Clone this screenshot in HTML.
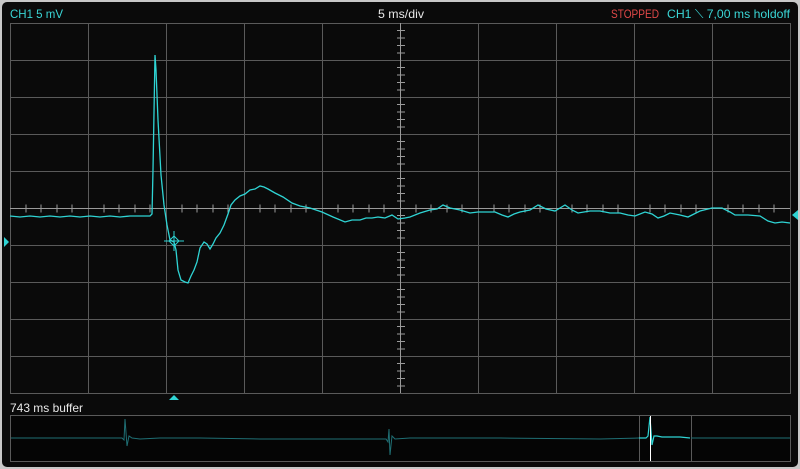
<!DOCTYPE html>
<html><head><style>
html,body{margin:0;padding:0;background:#0a0a0a;width:800px;height:469px;overflow:hidden}
svg{display:block}
text{font-family:"Liberation Sans",sans-serif;font-size:12px}
</style></head><body>
<svg width="800" height="469" viewBox="0 0 800 469">
<rect x="0" y="0" width="800" height="469" fill="#c8c8c8"/>
<rect x="2" y="2" width="796" height="465" rx="5" fill="#0a0a0a"/>
<text x="10" y="18" fill="#3ad6d6" textLength="53" lengthAdjust="spacingAndGlyphs">CH1 5 mV</text>
<text x="378" y="18" fill="#e8e8e8" textLength="46" lengthAdjust="spacingAndGlyphs">5 ms/div</text>
<text x="611" y="18" fill="#e04848" textLength="48" lengthAdjust="spacingAndGlyphs">STOPPED</text>
<text x="667" y="18" fill="#3ad6d6" textLength="123" lengthAdjust="spacingAndGlyphs">CH1 ⟍ 7,00 ms holdoff</text>
<g stroke="#5a5a5a" stroke-width="1" fill="none">
<rect x="10.5" y="23.5" width="780" height="370"/>
<path d="M88.5 23V393M166.5 23V393M244.5 23V393M322.5 23V393M478.5 23V393M556.5 23V393M634.5 23V393M712.5 23V393"/>
<path d="M10 60.5H790M10 97.5H790M10 134.5H790M10 171.5H790M10 245.5H790M10 282.5H790M10 319.5H790M10 356.5H790"/>
</g>
<g stroke="#9a9a9a" stroke-width="1">
<path d="M10 208.5H790M400.5 23V393"/>
<path d="M26 204.5v8M41 204.5v8M57 204.5v8M72 204.5v8M104 204.5v8M119 204.5v8M135 204.5v8M150 204.5v8M182 204.5v8M197 204.5v8M213 204.5v8M228 204.5v8M260 204.5v8M275 204.5v8M291 204.5v8M306 204.5v8M338 204.5v8M353 204.5v8M369 204.5v8M384 204.5v8M416 204.5v8M431 204.5v8M447 204.5v8M462 204.5v8M494 204.5v8M509 204.5v8M525 204.5v8M540 204.5v8M572 204.5v8M587 204.5v8M603 204.5v8M618 204.5v8M650 204.5v8M665 204.5v8M681 204.5v8M696 204.5v8M728 204.5v8M743 204.5v8M759 204.5v8M774 204.5v8"/>
<path d="M397 30.5h8M397 38h8M397 45.5h8M397 53h8M397 67.5h8M397 75h8M397 82.5h8M397 90h8M397 104.5h8M397 112h8M397 119.5h8M397 127h8M397 141.5h8M397 149h8M397 156.5h8M397 164h8M397 178.5h8M397 186h8M397 193.5h8M397 201h8M397 215.5h8M397 223h8M397 230.5h8M397 238h8M397 252.5h8M397 260h8M397 267.5h8M397 275h8M397 289.5h8M397 297h8M397 304.5h8M397 312h8M397 326.5h8M397 334h8M397 341.5h8M397 349h8M397 363.5h8M397 371h8M397 378.5h8M397 386h8"/>
</g>
<polyline fill="none" stroke="#2fd4d4" stroke-width="1.3" points="10,216 20,217 30,216 40,217 50,216 60,217 70,216 80,217 90,216 100,217 110,216 120,217 130,216 140,216 150,216 152,214 153,170 155,55 156,70 158,120 161,175 164,205 167,225 170,240 174,242 176,250 178,270 181,280 185,282 188,283 191,276 194,270 197,262 200,248 204,242 207,244 210,249 213,244 216,238 220,233 224,225 228,214 231,205 235,200 240,196 245,194 250,190 255,189 260,186 264,187 268,189 275,193 283,197 292,203 300,206 310,208 322,212 333,217 345,222 352,220 360,220 366,218 372,218 378,217 385,218 392,215 398,219 405,218 410,217 420,213 430,210 437,209 443,205 450,208 460,210 470,213 478,212 487,212 495,212 502,215 508,217 514,214 520,212 530,210 538,205 546,209 555,211 565,205 572,210 578,213 590,211 600,211 610,213 620,213 628,215 635,216 645,212 652,214 658,218 664,216 670,213 680,215 688,217 700,211 712,208 722,208 730,212 735,215 748,215 760,216 768,221 775,223 782,222 790,223"/>
<g stroke="#2fd4d4" stroke-width="1" fill="none">
<path d="M174 236L179 241L174 246L169 241Z"/>
<path d="M164 241h20M174 231v20"/>
</g>
<polygon points="4,237 9,242 4,247" fill="#2fd4d4"/>
<polygon points="798,210 792,215 798,220" fill="#2fd4d4"/>
<polygon points="169,400 174,395 179,400" fill="#2fd4d4"/>
<text x="10" y="412" fill="#e8e8e8" textLength="73" lengthAdjust="spacingAndGlyphs">743 ms buffer</text>
<rect x="10.5" y="415.5" width="780" height="46" fill="#050505" stroke="#5a5a5a"/>
<path d="M639.5 416v45M691.5 416v45" stroke="#5a5a5a"/>
<polyline fill="none" stroke="#1f6f74" stroke-width="1" points="11,438 122,438 124,440 125,419 127,446 129,436 132,438 140,439 160,438 200,438 260,439 380,439 386,439 388,442 389,429 390,455 392,436 395,439 410,438 500,438 600,439 639,438"/>
<polyline fill="none" stroke="#2fd4d4" stroke-width="1.2" points="639,438 646,438 648,436 650,417 652,445 654,436 657,436 662,437 670,437 680,437 690,438"/>
<line x1="650.5" y1="416" x2="650.5" y2="461" stroke="#ffffff" stroke-width="1"/>
<polyline fill="none" stroke="#1f6f74" stroke-width="1" points="691,438 720,438 790,438"/>
</svg>
</body></html>
